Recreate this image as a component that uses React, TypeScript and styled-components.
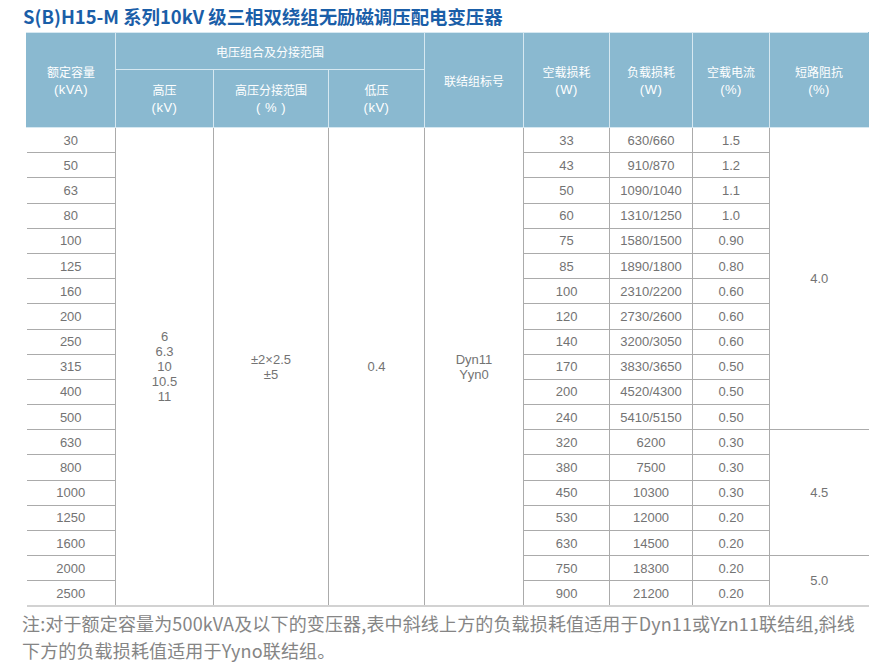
import { FC } from "react";
import styled, { createGlobalStyle } from "styled-components";

const GlobalStyle = createGlobalStyle`
  html, body {
    margin: 0;
    padding: 0;
    background: #ffffff;
  }
`;

type Row = {
  capacity: string;
  noLoadLoss: string;
  loadLoss: string;
  noLoadCurrent: string;
  impedance?: { value: string; span: number };
};

const rows: Row[] = [
  { capacity: "30", noLoadLoss: "33", loadLoss: "630/660", noLoadCurrent: "1.5", impedance: { value: "4.0", span: 12 } },
  { capacity: "50", noLoadLoss: "43", loadLoss: "910/870", noLoadCurrent: "1.2" },
  { capacity: "63", noLoadLoss: "50", loadLoss: "1090/1040", noLoadCurrent: "1.1" },
  { capacity: "80", noLoadLoss: "60", loadLoss: "1310/1250", noLoadCurrent: "1.0" },
  { capacity: "100", noLoadLoss: "75", loadLoss: "1580/1500", noLoadCurrent: "0.90" },
  { capacity: "125", noLoadLoss: "85", loadLoss: "1890/1800", noLoadCurrent: "0.80" },
  { capacity: "160", noLoadLoss: "100", loadLoss: "2310/2200", noLoadCurrent: "0.60" },
  { capacity: "200", noLoadLoss: "120", loadLoss: "2730/2600", noLoadCurrent: "0.60" },
  { capacity: "250", noLoadLoss: "140", loadLoss: "3200/3050", noLoadCurrent: "0.60" },
  { capacity: "315", noLoadLoss: "170", loadLoss: "3830/3650", noLoadCurrent: "0.50" },
  { capacity: "400", noLoadLoss: "200", loadLoss: "4520/4300", noLoadCurrent: "0.50" },
  { capacity: "500", noLoadLoss: "240", loadLoss: "5410/5150", noLoadCurrent: "0.50" },
  { capacity: "630", noLoadLoss: "320", loadLoss: "6200", noLoadCurrent: "0.30", impedance: { value: "4.5", span: 5 } },
  { capacity: "800", noLoadLoss: "380", loadLoss: "7500", noLoadCurrent: "0.30" },
  { capacity: "1000", noLoadLoss: "450", loadLoss: "10300", noLoadCurrent: "0.30" },
  { capacity: "1250", noLoadLoss: "530", loadLoss: "12000", noLoadCurrent: "0.20" },
  { capacity: "1600", noLoadLoss: "630", loadLoss: "14500", noLoadCurrent: "0.20" },
  { capacity: "2000", noLoadLoss: "750", loadLoss: "18300", noLoadCurrent: "0.20", impedance: { value: "5.0", span: 2 } },
  { capacity: "2500", noLoadLoss: "900", loadLoss: "21200", noLoadCurrent: "0.20" },
];

const colWidths = [89, 98, 115, 96, 99, 86, 83, 77, 99];

const App: FC = () => {
  return (
    <Page>
      <GlobalStyle />
      <Title>S(B)H15-M 系列10kV 级三相双绕组无励磁调压配电变压器</Title>

      <Table>
        <colgroup>
          {colWidths.map((w, i) => (
            <col key={i} style={{ width: w }} />
          ))}
        </colgroup>
        <thead>
          <tr>
            <Th rowSpan={2} $first>
              额定容量
              <br />
              <Unit>(kVA)</Unit>
            </Th>
            <Th colSpan={3} $height={37}>
              电压组合及分接范围
            </Th>
            <Th rowSpan={2}>联结组标号</Th>
            <Th rowSpan={2}>
              空载损耗
              <br />
              <Unit>(W)</Unit>
            </Th>
            <Th rowSpan={2}>
              负载损耗
              <br />
              <Unit>(W)</Unit>
            </Th>
            <Th rowSpan={2}>
              空载电流
              <br />
              <Unit>(%)</Unit>
            </Th>
            <Th rowSpan={2} $last>
              短路阻抗
              <br />
              <Unit>(%)</Unit>
            </Th>
          </tr>
          <tr>
            <Th $height={58}>
              高压
              <br />
              <Unit>(kV)</Unit>
            </Th>
            <Th>
              高压分接范围
              <br />
              <Unit>( % )</Unit>
            </Th>
            <Th>
              低压
              <br />
              <Unit>(kV)</Unit>
            </Th>
          </tr>
        </thead>
        <tbody>
          {rows.map((r, i) => (
            <tr key={r.capacity}>
              <Td $first>{r.capacity}</Td>
              {i === 0 && (
                <>
                  <Td rowSpan={rows.length}>
                    <Stack>
                      6
                      <br />
                      6.3
                      <br />
                      10
                      <br />
                      10.5
                      <br />
                      11
                    </Stack>
                  </Td>
                  <Td rowSpan={rows.length}>
                    <Stack>
                      ±2×2.5
                      <br />
                      ±5
                    </Stack>
                  </Td>
                  <Td rowSpan={rows.length}>0.4</Td>
                  <Td rowSpan={rows.length}>
                    <Stack>
                      Dyn11
                      <br />
                      Yyn0
                    </Stack>
                  </Td>
                </>
              )}
              <Td>{r.noLoadLoss}</Td>
              <Td>{r.loadLoss}</Td>
              <Td>{r.noLoadCurrent}</Td>
              {r.impedance && (
                <Td rowSpan={r.impedance.span} $last>
                  {r.impedance.value}
                </Td>
              )}
            </tr>
          ))}
        </tbody>
      </Table>

      <Note>
        注:对于额定容量为500kVA及以下的变压器,表中斜线上方的负载损耗值适用于Dyn11或Yzn11联结组,斜线
        <br />
        下方的负载损耗值适用于Yyno联结组。
      </Note>
    </Page>
  );
};

export default App;

const Page = styled.div`
  width: 882px;
  height: 668px;
  box-sizing: border-box;
  padding: 4px 14px 0 22px;
  overflow: hidden;
`;

const Title = styled.h1`
  margin: 0 0 0 1px;
  font-family: "Noto Sans CJK SC", "Noto Sans", sans-serif;
  font-size: 18.4px;
  line-height: 24px;
  font-weight: 700;
  color: #1a5ea8;
  white-space: nowrap;
`;

const Table = styled.table`
  margin: 4px 0 0 4px;
  width: 842px;
  table-layout: fixed;
  border-collapse: collapse;
  border-bottom: 2px solid #d2d2d2;
`;

const Th = styled.th<{ $first?: boolean; $last?: boolean; $height?: number }>`
  background: #8ab9d0;
  color: #ffffff;
  font-family: "Noto Sans CJK SC", "Liberation Sans", sans-serif;
  font-size: 12px;
  font-weight: 400;
  line-height: 17px;
  text-align: center;
  vertical-align: middle;
  padding: 0;
  border: 1px solid #d6e8f1;
  border-left-color: ${(p) => (p.$first ? "#8ab9d0" : "#d6e8f1")};
  border-right-color: ${(p) => (p.$last ? "#8ab9d0" : "#d6e8f1")};
  height: ${(p) => (p.$height ? `${p.$height}px` : "auto")};
  box-sizing: border-box;
`;

const Unit = styled.span`
  font-family: "Liberation Sans", Arial, sans-serif;
  font-size: 13px;
  letter-spacing: 0.5px;
`;

const Td = styled.td<{ $first?: boolean; $last?: boolean }>`
  height: 25.2px;
  padding: 0;
  box-sizing: border-box;
  text-align: center;
  vertical-align: middle;
  font-family: "Liberation Sans", Arial, sans-serif;
  font-size: 13px;
  color: #737373;
  border: 1px solid #ababab;
  border-left: ${(p) => (p.$first ? "none" : "1px solid #ababab")};
  border-right: ${(p) => (p.$last ? "none" : "1px solid #ababab")};
`;

const Stack = styled.div`
  line-height: 15px;
`;

const Note = styled.p`
  margin: 3px 0 0 0;
  font-family: "Noto Sans CJK SC", "Noto Sans", sans-serif;
  font-size: 18px;
  line-height: 27px;
  letter-spacing: 0.15px;
  color: #858585;
  white-space: nowrap;
`;
